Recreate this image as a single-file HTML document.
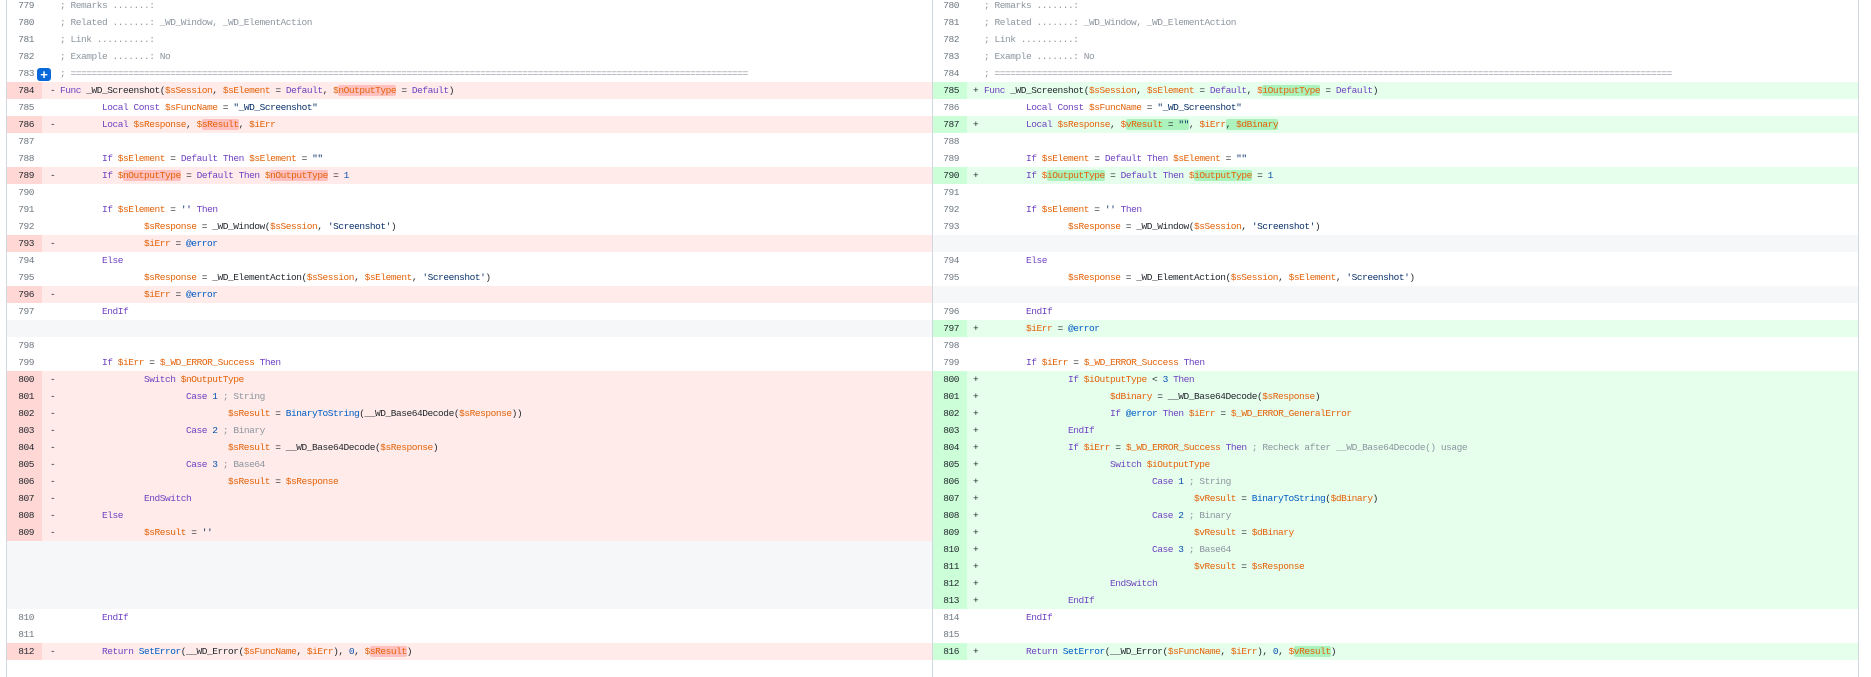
<!DOCTYPE html>
<html><head><meta charset="utf-8"><style>
html,body{margin:0;padding:0;background:#fff;width:1871px;height:666px;overflow:hidden}
#w{position:absolute;left:6px;top:-3px;width:1851px;border-left:1px solid #d0d7de;border-right:1px solid #d0d7de}
.r{display:flex;height:17px;line-height:17px;font-family:"Liberation Mono",monospace;font-size:9.5px;letter-spacing:-0.45px;color:#24292f}
.h{position:relative;display:flex;height:17px}
.L{width:925px;border-right:1px solid #d0d7de}
.R{width:925px}
.n{width:27px;padding-right:8px;text-align:right;color:#6e7781;flex:none}
.R .n{width:26px}
.c{position:relative;flex:1;white-space:pre;tab-size:42px;-moz-tab-size:42px}
.c .m{position:absolute;left:8px;top:0}
.c .t{position:absolute;left:18px;top:0}
.R .c .m{left:6px}.R .c .t{left:17px}
.del .n{background:#ffd7d5;color:#24292f}.del .c{background:#ffebe9}
.add .n{background:#ccffd8;color:#24292f}.add .c{background:#e6ffec}
.emp{background:#f6f7f9}
.k{color:#6f42c1}.v{color:#e36209}.s{color:#0a3069}.cm{color:#8c959f}.b{color:#0550ae}.e{color:#005cc5}
.hd{background:#ffc1c0;border-radius:2px}.ha{background:#abf2bc;border-radius:2px}
#btn{position:absolute;left:30px;top:3px;width:14px;height:13px;background:#0969da;border-radius:3px;color:#fff;font:bold 13px/13px "Liberation Sans",sans-serif;text-align:center;letter-spacing:0;z-index:2}
</style></head><body><div id="w">
<div class="r"><div class="h L"><span class="n">779</span><span class="c"><span class="t"><span class="cm">; Remarks .......:</span></span></span></div><div class="h R"><span class="n">780</span><span class="c"><span class="t"><span class="cm">; Remarks .......:</span></span></span></div></div>
<div class="r"><div class="h L"><span class="n">780</span><span class="c"><span class="t"><span class="cm">; Related .......: _WD_Window, _WD_ElementAction</span></span></span></div><div class="h R"><span class="n">781</span><span class="c"><span class="t"><span class="cm">; Related .......: _WD_Window, _WD_ElementAction</span></span></span></div></div>
<div class="r"><div class="h L"><span class="n">781</span><span class="c"><span class="t"><span class="cm">; Link ..........:</span></span></span></div><div class="h R"><span class="n">782</span><span class="c"><span class="t"><span class="cm">; Link ..........:</span></span></span></div></div>
<div class="r"><div class="h L"><span class="n">782</span><span class="c"><span class="t"><span class="cm">; Example .......: No</span></span></span></div><div class="h R"><span class="n">783</span><span class="c"><span class="t"><span class="cm">; Example .......: No</span></span></span></div></div>
<div class="r"><div class="h L"><span class="n">783</span><span id="btn">+</span><span class="c"><span class="t"><span class="cm">; =================================================================================================================================</span></span></span></div><div class="h R"><span class="n">784</span><span class="c"><span class="t"><span class="cm">; =================================================================================================================================</span></span></span></div></div>
<div class="r"><div class="h L del"><span class="n">784</span><span class="c"><span class="m">-</span><span class="t"><span class="k">Func</span> _WD_Screenshot(<span class="v">$sSession</span>, <span class="v">$sElement</span> = <span class="k">Default</span>, <span class="v">$<span class="hd">nOutputType</span></span> = <span class="k">Default</span>)</span></span></div><div class="h R add"><span class="n">785</span><span class="c"><span class="m">+</span><span class="t"><span class="k">Func</span> _WD_Screenshot(<span class="v">$sSession</span>, <span class="v">$sElement</span> = <span class="k">Default</span>, <span class="v">$<span class="ha">iOutputType</span></span> = <span class="k">Default</span>)</span></span></div></div>
<div class="r"><div class="h L"><span class="n">785</span><span class="c"><span class="t">	<span class="k">Local Const</span> <span class="v">$sFuncName</span> = <span class="s">"_WD_Screenshot"</span></span></span></div><div class="h R"><span class="n">786</span><span class="c"><span class="t">	<span class="k">Local Const</span> <span class="v">$sFuncName</span> = <span class="s">"_WD_Screenshot"</span></span></span></div></div>
<div class="r"><div class="h L del"><span class="n">786</span><span class="c"><span class="m">-</span><span class="t">	<span class="k">Local</span> <span class="v">$sResponse</span>, <span class="v">$<span class="hd">sResult</span></span>, <span class="v">$iErr</span></span></span></div><div class="h R add"><span class="n">787</span><span class="c"><span class="m">+</span><span class="t">	<span class="k">Local</span> <span class="v">$sResponse</span>, <span class="v">$</span><span class="ha"><span class="v">vResult</span> = <span class="s">""</span></span>, <span class="v">$iErr</span><span class="ha">, <span class="v">$dBinary</span></span></span></span></div></div>
<div class="r"><div class="h L"><span class="n">787</span><span class="c"></span></div><div class="h R"><span class="n">788</span><span class="c"></span></div></div>
<div class="r"><div class="h L"><span class="n">788</span><span class="c"><span class="t">	<span class="k">If</span> <span class="v">$sElement</span> = <span class="k">Default Then</span> <span class="v">$sElement</span> = <span class="s">""</span></span></span></div><div class="h R"><span class="n">789</span><span class="c"><span class="t">	<span class="k">If</span> <span class="v">$sElement</span> = <span class="k">Default Then</span> <span class="v">$sElement</span> = <span class="s">""</span></span></span></div></div>
<div class="r"><div class="h L del"><span class="n">789</span><span class="c"><span class="m">-</span><span class="t">	<span class="k">If</span> <span class="v">$<span class="hd">nOutputType</span></span> = <span class="k">Default Then</span> <span class="v">$<span class="hd">nOutputType</span></span> = <span class="b">1</span></span></span></div><div class="h R add"><span class="n">790</span><span class="c"><span class="m">+</span><span class="t">	<span class="k">If</span> <span class="v">$<span class="ha">iOutputType</span></span> = <span class="k">Default Then</span> <span class="v">$<span class="ha">iOutputType</span></span> = <span class="b">1</span></span></span></div></div>
<div class="r"><div class="h L"><span class="n">790</span><span class="c"></span></div><div class="h R"><span class="n">791</span><span class="c"></span></div></div>
<div class="r"><div class="h L"><span class="n">791</span><span class="c"><span class="t">	<span class="k">If</span> <span class="v">$sElement</span> = <span class="s">''</span> <span class="k">Then</span></span></span></div><div class="h R"><span class="n">792</span><span class="c"><span class="t">	<span class="k">If</span> <span class="v">$sElement</span> = <span class="s">''</span> <span class="k">Then</span></span></span></div></div>
<div class="r"><div class="h L"><span class="n">792</span><span class="c"><span class="t">		<span class="v">$sResponse</span> = _WD_Window(<span class="v">$sSession</span>, <span class="s">'Screenshot'</span>)</span></span></div><div class="h R"><span class="n">793</span><span class="c"><span class="t">		<span class="v">$sResponse</span> = _WD_Window(<span class="v">$sSession</span>, <span class="s">'Screenshot'</span>)</span></span></div></div>
<div class="r"><div class="h L del"><span class="n">793</span><span class="c"><span class="m">-</span><span class="t">		<span class="v">$iErr</span> = <span class="e">@error</span></span></span></div><div class="h R emp"></div></div>
<div class="r"><div class="h L"><span class="n">794</span><span class="c"><span class="t">	<span class="k">Else</span></span></span></div><div class="h R"><span class="n">794</span><span class="c"><span class="t">	<span class="k">Else</span></span></span></div></div>
<div class="r"><div class="h L"><span class="n">795</span><span class="c"><span class="t">		<span class="v">$sResponse</span> = _WD_ElementAction(<span class="v">$sSession</span>, <span class="v">$sElement</span>, <span class="s">'Screenshot'</span>)</span></span></div><div class="h R"><span class="n">795</span><span class="c"><span class="t">		<span class="v">$sResponse</span> = _WD_ElementAction(<span class="v">$sSession</span>, <span class="v">$sElement</span>, <span class="s">'Screenshot'</span>)</span></span></div></div>
<div class="r"><div class="h L del"><span class="n">796</span><span class="c"><span class="m">-</span><span class="t">		<span class="v">$iErr</span> = <span class="e">@error</span></span></span></div><div class="h R emp"></div></div>
<div class="r"><div class="h L"><span class="n">797</span><span class="c"><span class="t">	<span class="k">EndIf</span></span></span></div><div class="h R"><span class="n">796</span><span class="c"><span class="t">	<span class="k">EndIf</span></span></span></div></div>
<div class="r"><div class="h L emp"></div><div class="h R add"><span class="n">797</span><span class="c"><span class="m">+</span><span class="t">	<span class="v">$iErr</span> = <span class="e">@error</span></span></span></div></div>
<div class="r"><div class="h L"><span class="n">798</span><span class="c"></span></div><div class="h R"><span class="n">798</span><span class="c"></span></div></div>
<div class="r"><div class="h L"><span class="n">799</span><span class="c"><span class="t">	<span class="k">If</span> <span class="v">$iErr</span> = <span class="v">$_WD_ERROR_Success</span> <span class="k">Then</span></span></span></div><div class="h R"><span class="n">799</span><span class="c"><span class="t">	<span class="k">If</span> <span class="v">$iErr</span> = <span class="v">$_WD_ERROR_Success</span> <span class="k">Then</span></span></span></div></div>
<div class="r"><div class="h L del"><span class="n">800</span><span class="c"><span class="m">-</span><span class="t">		<span class="k">Switch</span> <span class="v">$nOutputType</span></span></span></div><div class="h R add"><span class="n">800</span><span class="c"><span class="m">+</span><span class="t">		<span class="k">If</span> <span class="v">$iOutputType</span> &lt; <span class="b">3</span> <span class="k">Then</span></span></span></div></div>
<div class="r"><div class="h L del"><span class="n">801</span><span class="c"><span class="m">-</span><span class="t">			<span class="k">Case</span> <span class="b">1</span> <span class="cm">; String</span></span></span></div><div class="h R add"><span class="n">801</span><span class="c"><span class="m">+</span><span class="t">			<span class="v">$dBinary</span> = __WD_Base64Decode(<span class="v">$sResponse</span>)</span></span></div></div>
<div class="r"><div class="h L del"><span class="n">802</span><span class="c"><span class="m">-</span><span class="t">				<span class="v">$sResult</span> = <span class="e">BinaryToString</span>(__WD_Base64Decode(<span class="v">$sResponse</span>))</span></span></div><div class="h R add"><span class="n">802</span><span class="c"><span class="m">+</span><span class="t">			<span class="k">If</span> <span class="e">@error</span> <span class="k">Then</span> <span class="v">$iErr</span> = <span class="v">$_WD_ERROR_GeneralError</span></span></span></div></div>
<div class="r"><div class="h L del"><span class="n">803</span><span class="c"><span class="m">-</span><span class="t">			<span class="k">Case</span> <span class="b">2</span> <span class="cm">; Binary</span></span></span></div><div class="h R add"><span class="n">803</span><span class="c"><span class="m">+</span><span class="t">		<span class="k">EndIf</span></span></span></div></div>
<div class="r"><div class="h L del"><span class="n">804</span><span class="c"><span class="m">-</span><span class="t">				<span class="v">$sResult</span> = __WD_Base64Decode(<span class="v">$sResponse</span>)</span></span></div><div class="h R add"><span class="n">804</span><span class="c"><span class="m">+</span><span class="t">		<span class="k">If</span> <span class="v">$iErr</span> = <span class="v">$_WD_ERROR_Success</span> <span class="k">Then</span> <span class="cm">; Recheck after __WD_Base64Decode() usage</span></span></span></div></div>
<div class="r"><div class="h L del"><span class="n">805</span><span class="c"><span class="m">-</span><span class="t">			<span class="k">Case</span> <span class="b">3</span> <span class="cm">; Base64</span></span></span></div><div class="h R add"><span class="n">805</span><span class="c"><span class="m">+</span><span class="t">			<span class="k">Switch</span> <span class="v">$iOutputType</span></span></span></div></div>
<div class="r"><div class="h L del"><span class="n">806</span><span class="c"><span class="m">-</span><span class="t">				<span class="v">$sResult</span> = <span class="v">$sResponse</span></span></span></div><div class="h R add"><span class="n">806</span><span class="c"><span class="m">+</span><span class="t">				<span class="k">Case</span> <span class="b">1</span> <span class="cm">; String</span></span></span></div></div>
<div class="r"><div class="h L del"><span class="n">807</span><span class="c"><span class="m">-</span><span class="t">		<span class="k">EndSwitch</span></span></span></div><div class="h R add"><span class="n">807</span><span class="c"><span class="m">+</span><span class="t">					<span class="v">$vResult</span> = <span class="e">BinaryToString</span>(<span class="v">$dBinary</span>)</span></span></div></div>
<div class="r"><div class="h L del"><span class="n">808</span><span class="c"><span class="m">-</span><span class="t">	<span class="k">Else</span></span></span></div><div class="h R add"><span class="n">808</span><span class="c"><span class="m">+</span><span class="t">				<span class="k">Case</span> <span class="b">2</span> <span class="cm">; Binary</span></span></span></div></div>
<div class="r"><div class="h L del"><span class="n">809</span><span class="c"><span class="m">-</span><span class="t">		<span class="v">$sResult</span> = <span class="s">''</span></span></span></div><div class="h R add"><span class="n">809</span><span class="c"><span class="m">+</span><span class="t">					<span class="v">$vResult</span> = <span class="v">$dBinary</span></span></span></div></div>
<div class="r"><div class="h L emp"></div><div class="h R add"><span class="n">810</span><span class="c"><span class="m">+</span><span class="t">				<span class="k">Case</span> <span class="b">3</span> <span class="cm">; Base64</span></span></span></div></div>
<div class="r"><div class="h L emp"></div><div class="h R add"><span class="n">811</span><span class="c"><span class="m">+</span><span class="t">					<span class="v">$vResult</span> = <span class="v">$sResponse</span></span></span></div></div>
<div class="r"><div class="h L emp"></div><div class="h R add"><span class="n">812</span><span class="c"><span class="m">+</span><span class="t">			<span class="k">EndSwitch</span></span></span></div></div>
<div class="r"><div class="h L emp"></div><div class="h R add"><span class="n">813</span><span class="c"><span class="m">+</span><span class="t">		<span class="k">EndIf</span></span></span></div></div>
<div class="r"><div class="h L"><span class="n">810</span><span class="c"><span class="t">	<span class="k">EndIf</span></span></span></div><div class="h R"><span class="n">814</span><span class="c"><span class="t">	<span class="k">EndIf</span></span></span></div></div>
<div class="r"><div class="h L"><span class="n">811</span><span class="c"></span></div><div class="h R"><span class="n">815</span><span class="c"></span></div></div>
<div class="r"><div class="h L del"><span class="n">812</span><span class="c"><span class="m">-</span><span class="t">	<span class="k">Return</span> <span class="e">SetError</span>(__WD_Error(<span class="v">$sFuncName</span>, <span class="v">$iErr</span>), <span class="b">0</span>, <span class="v">$<span class="hd">sResult</span></span>)</span></span></div><div class="h R add"><span class="n">816</span><span class="c"><span class="m">+</span><span class="t">	<span class="k">Return</span> <span class="e">SetError</span>(__WD_Error(<span class="v">$sFuncName</span>, <span class="v">$iErr</span>), <span class="b">0</span>, <span class="v">$<span class="ha">vResult</span></span>)</span></span></div></div>
<div class="r"><div class="h L"><span class="n"></span><span class="c"></span></div><div class="h R"><span class="n"></span><span class="c"></span></div></div>
</div></body></html>
